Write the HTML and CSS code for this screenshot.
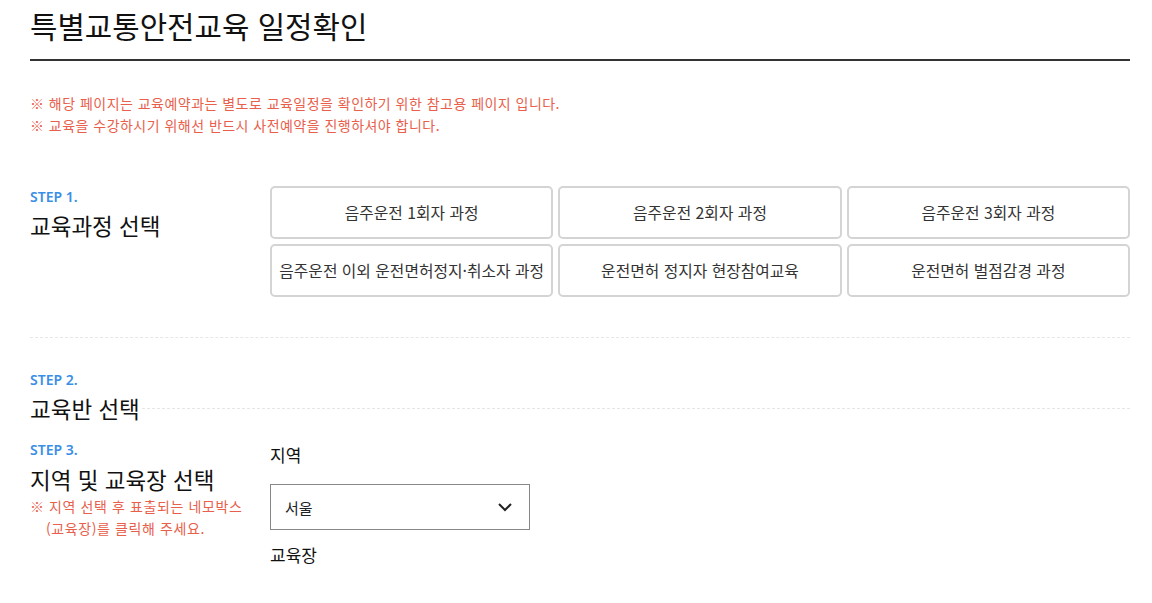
FILE: index.html
```html
<!DOCTYPE html>
<html lang="ko">
<head>
<meta charset="utf-8">
<title>특별교통안전교육 일정확인</title>
<link rel="stylesheet" href="styles.css">
</head>
<body>
<div class="page">
  <h1 class="page-title">특별교통안전교육 일정확인</h1>
  <div class="notice">
    <p>※ 해당 페이지는 교육예약과는 별도로 교육일정을 확인하기 위한 참고용 페이지 입니다.</p>
    <p>※ 교육을 수강하시기 위해선 반드시 사전예약을 진행하셔야 합니다.</p>
  </div>

  <section class="step step-1">
    <div class="step-head">
      <div class="step-no">STEP 1.</div>
      <h2 class="step-title">교육과정 선택</h2>
    </div>
    <div class="course-grid">
      <button class="course">음주운전 1회자 과정</button>
      <button class="course">음주운전 2회자 과정</button>
      <button class="course">음주운전 3회자 과정</button>
      <button class="course">음주운전 이외 운전면허정지·취소자 과정</button>
      <button class="course">운전면허 정지자 현장참여교육</button>
      <button class="course">운전면허 벌점감경 과정</button>
    </div>
  </section>

  <section class="step step-2">
    <div class="step-no">STEP 2.</div>
    <h2 class="step-title line-title">교육반 선택</h2>
  </section>

  <section class="step step-3">
    <div class="step-head">
      <div class="step-no">STEP 3.</div>
      <h2 class="step-title wide">지역 및 교육장 선택</h2>
      <p class="step-note">※ 지역 선택 후 표출되는 네모박스<br>(교육장)를 클릭해 주세요.</p>
    </div>
    <div class="region">
      <div class="field-label">지역</div>
      <div class="select">
        <span>서울</span>
        <svg width="16" height="10" viewBox="0 0 16 10"><path d="M2 2 L8 8 L14 2" fill="none" stroke="#222" stroke-width="2"/></svg>
      </div>
      <div class="field-label place">교육장</div>
    </div>
  </section>
</div>
</body>
</html>
```

FILE: styles.css
```css
* { box-sizing: border-box; }
body {
  margin: 0;
  background: #fff;
  color: #111;
  font-family: "Noto Sans CJK KR", "Noto Sans", sans-serif;
}
.page {
  padding: 0 22px 0 30px;
}
.page-title {
  margin: 0;
  font-size: 29.8px;
  font-weight: 400;
  line-height: 40px;
  padding-top: 5px;
  height: 61px;
  border-bottom: 2px solid #333;
  color: #111;
}
.notice {
  margin-top: 31px;
  color: #e8604c;
  font-size: 14px;
  letter-spacing: 0.47px;
  line-height: 22px;
}
.notice p { margin: 0; }

.step {
  display: flex;
}
.step-1 {
  margin-top: 50px;
  padding-bottom: 40px;
  border-bottom: 1px dashed #e6e6e6;
}
.step-head {
  width: 240px;
  flex: none;
  padding-top: 1px;
}
.step-no {
  font-family: "Noto Sans", sans-serif;
  color: #3a8ee6;
  font-size: 14px;
  font-weight: 600;
  line-height: 20px;
}
.step-title {
  margin: 3px 0 0;
  font-size: 22.5px;
  font-weight: 400;
  line-height: 30px;
  color: #111;
}
.step-title.wide {
  margin-top: 4px;
}
.course-grid {
  flex: 1;
  display: grid;
  grid-template-columns: repeat(3, 1fr);
  gap: 5px;
}
.course {
  height: 53px;
  border: 2px solid #d4d4d4;
  border-radius: 5px;
  background: #fff;
  font-family: "Noto Sans CJK KR", "Noto Sans", sans-serif;
  font-size: 15.8px;
  color: #333;
  padding: 0;
}

.step-2 {
  flex-direction: column;
  padding-top: 32px;
}
.line-title {
  display: flex;
  align-items: center;
}
.line-title::after {
  content: "";
  flex: 1;
  border-top: 1px dashed #e6e6e6;
  margin-left: 2px;
}

.step-3 {
  margin-top: 16px;
}
.step-note {
  margin: 1px 0 0;
  color: #e8604c;
  font-size: 14px;
  letter-spacing: 0.6px;
  line-height: 22px;
  padding-left: 16px;
  text-indent: -16px;
  white-space: nowrap;
}
.region {
  padding-top: 4px;
}
.field-label {
  font-size: 17px;
  line-height: 24px;
}
.select {
  margin-top: 17px;
  width: 260px;
  height: 46px;
  border: 1px solid #888;
  display: flex;
  align-items: center;
  justify-content: space-between;
  padding: 0 16px 0 14px;
  font-size: 15px;
  color: #222;
}
.place {
  margin-top: 13px;
}
```
